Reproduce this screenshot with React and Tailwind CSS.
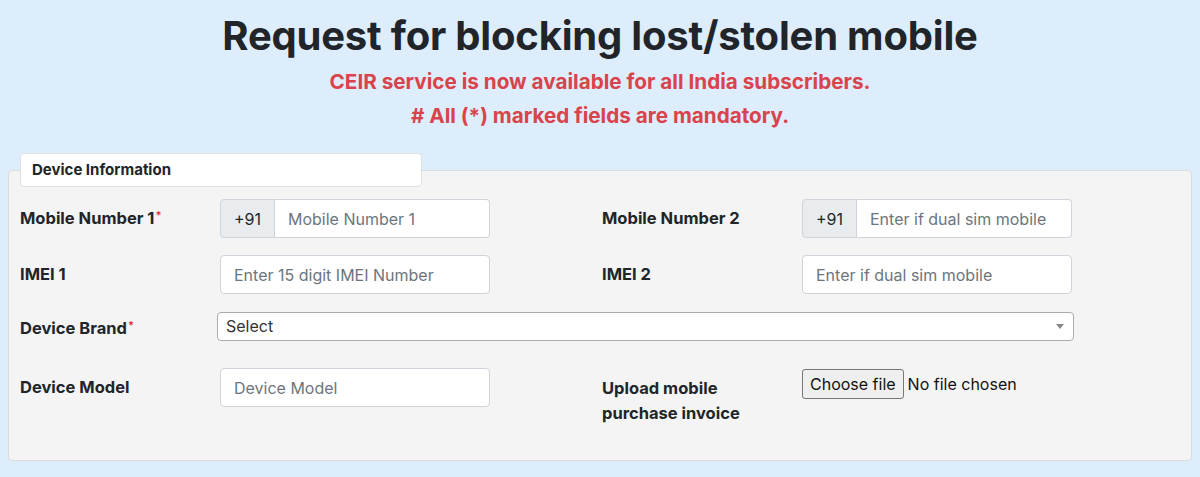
const font = { fontFamily: 'Inter, "Noto Sans", sans-serif' };

function Label({ children, required }) {
  return (
    <label className="w-[200px] shrink-0 text-[16.5px] font-bold leading-[25px] text-[#212529]">
      {children}
      {required && <sup className="ml-[1px] text-[11px] text-[#dc3545]">*</sup>}
    </label>
  );
}

function TextInput({ placeholder }) {
  return (
    <input
      type="text"
      placeholder={placeholder}
      className="h-[39px] w-[270px] rounded-[4px] border border-[#ced4da] bg-white px-[13px] text-[16px] text-[#212529] outline-none placeholder:text-[#6c757d]"
    />
  );
}

function PhoneInput({ placeholder }) {
  return (
    <div className="flex h-[39px] w-[270px]">
      <span className="flex w-[55px] items-center justify-center rounded-l-[4px] border border-[#ced4da] bg-[#e9ecef] text-[16px] text-[#212529]">
        +91
      </span>
      <input
        type="text"
        placeholder={placeholder}
        className="min-w-0 flex-1 rounded-r-[4px] border border-l-0 border-[#ced4da] bg-white px-[13px] text-[16px] text-[#212529] outline-none placeholder:text-[#6c757d]"
      />
    </div>
  );
}

export default function App() {
  return (
    <div style={font} className="min-h-[477px] bg-[#deedfc] px-[8px] pt-[12px]">
      <div className="text-center">
        <h1 className="text-[40px] font-bold leading-[48px] tracking-[-0.2px] text-[#212529]">
          Request for blocking lost/stolen mobile
        </h1>
        <p className="mt-[10px] text-[20.7px] font-bold leading-[24px] text-[#d9434b]">
          CEIR service is now available for all India subscribers.
        </p>
        <p className="mt-[10px] text-[20.7px] font-bold leading-[24px] text-[#d9434b]">
          # All (*) marked fields are mandatory.
        </p>
      </div>

      <div className="mt-[25px]">
        <div className="relative z-10 ml-[12px] flex h-[34px] w-[402px] items-center rounded-[4px] border border-[#e1e1e1] bg-white px-[11px] text-[15px] font-bold text-[#212529]">
          Device Information
        </div>
        <div className="mt-[-17px] h-[291px] rounded-[4px] border border-[#dcdcdc] bg-[#f4f4f4] px-[11px] pt-[28px]">
          <div className="flex flex-col">
            <div className="flex items-center">
              <div className="flex w-[582px] items-center">
                <Label required>Mobile Number 1</Label>
                <PhoneInput placeholder="Mobile Number 1" />
              </div>
              <div className="flex items-center">
                <Label>Mobile Number 2</Label>
                <PhoneInput placeholder="Enter if dual sim mobile" />
              </div>
            </div>

            <div className="mt-[17px] flex items-center">
              <div className="flex w-[582px] items-center">
                <Label>IMEI 1</Label>
                <TextInput placeholder="Enter 15 digit IMEI Number" />
              </div>
              <div className="flex items-center">
                <Label>IMEI 2</Label>
                <TextInput placeholder="Enter if dual sim mobile" />
              </div>
            </div>

            <div className="mt-[17px] flex items-center">
              <label className="w-[197px] shrink-0 pt-[5px] text-[16.5px] font-bold leading-[25px] text-[#212529]">
                Device Brand<sup className="ml-[1px] text-[11px] text-[#dc3545]">*</sup>
              </label>
              <div className="flex h-[29px] w-[857px] items-center justify-between rounded-[4px] border border-[#aaaaaa] bg-white pl-[8px] pr-[9px]">
                <span className="text-[16px] text-[#333]">Select</span>
                <span className="h-0 w-0 border-x-[4px] border-t-[5px] border-x-transparent border-t-[#888]" />
              </div>
            </div>

            <div className="mt-[27px] flex items-start">
              <div className="flex w-[582px] items-center">
                <Label>Device Model</Label>
                <TextInput placeholder="Device Model" />
              </div>
              <div className="flex items-start">
                <label className="w-[200px] shrink-0 pt-[8px] text-[16.5px] font-bold leading-[25px] text-[#212529]">
                  Upload mobile
                  <br />
                  purchase invoice
                </label>
                <div className="flex items-center pt-[1px]">
                  <button className="h-[30px] rounded-[3px] border border-[#767676] bg-[#efefef] px-[7px] text-[16px] text-[#111]">
                    Choose file
                  </button>
                  <span className="ml-[4px] text-[16px] text-[#111]">No file chosen</span>
                </div>
              </div>
            </div>
          </div>
        </div>
      </div>
    </div>
  );
}
